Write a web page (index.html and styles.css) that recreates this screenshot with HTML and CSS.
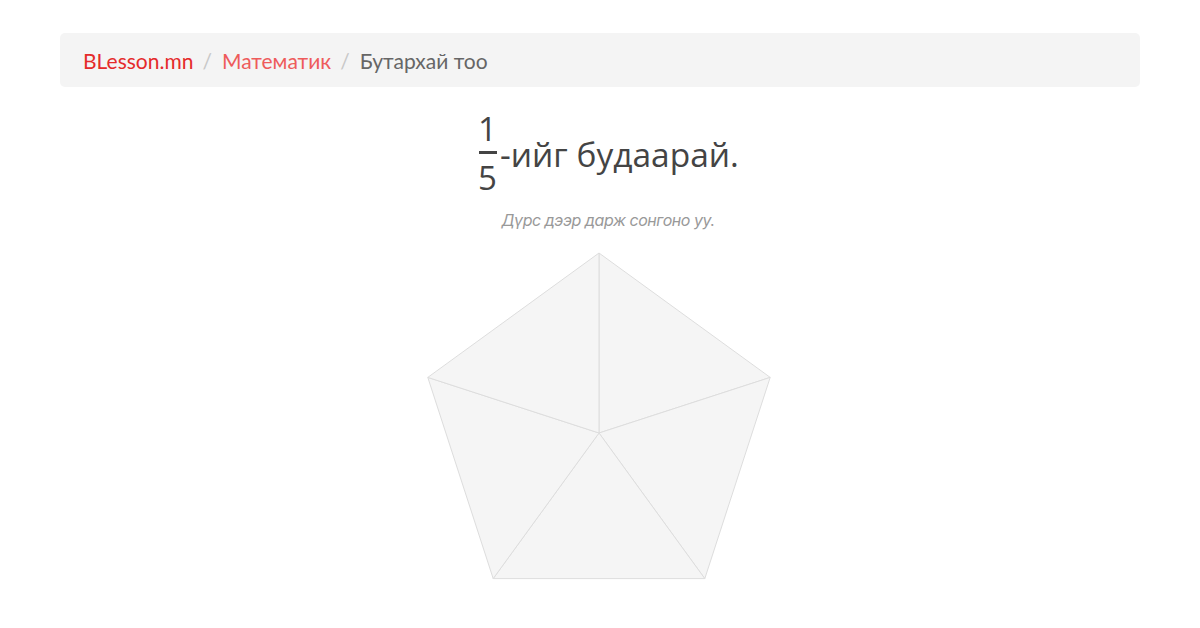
FILE: index.html
```html
<!DOCTYPE html>
<html lang="mn">
<head>
<meta charset="utf-8">
<link rel="stylesheet" href="styles.css">
</head>
<body>
<div class="page">
  <nav class="crumbs">
    <a class="c-home" href="#">BLesson.mn</a>
    <span class="sep">/</span>
    <a class="c-sub" href="#">Математик</a>
    <span class="sep">/</span>
    <span class="c-cur">Бутархай тоо</span>
  </nav>
  <div class="task">
    <div class="title">
      <span class="frac"><span class="num">1</span><span class="bar"></span><span class="den">5</span></span><span class="txt">-ийг будаарай.</span>
    </div>
    <div class="hint">Дүрс дээр дарж сонгоно уу.</div>
    <svg class="shape" width="346" height="330" viewBox="426 252 346 330">
      <g fill="#f5f5f5" stroke="#dddddd" stroke-width="1">
        <polygon points="599,434 599,254 770.2,378.4"/>
        <polygon points="599,434 770.2,378.4 704.8,579.6"/>
        <polygon points="599,434 704.8,579.6 493.2,579.6"/>
        <polygon points="599,434 493.2,579.6 427.8,378.4"/>
        <polygon points="599,434 427.8,378.4 599,254"/>
      </g>
    </svg>
  </div>
</div>
</body>
</html>
```
FILE: styles.css
```css
html, body { margin: 0; padding: 0; background: #fff; }
body { font-family: "Lato", "Liberation Sans", sans-serif; }
.page { padding: 33px 60px 0; }
.crumbs {
  display: flex; align-items: center;
  height: 54px; padding: 0 23px;
  background: #f4f4f4; border-radius: 5px;
  font-size: 21px;
}
.crumbs a { text-decoration: none; }
.c-home { color: #e52b2b; }
.c-sub { color: #ee5b5b; }
.c-cur { color: #666; }
.sep { color: #c8c8c8; padding: 0 10px 0 9px; }
.task { display: flex; flex-direction: column; align-items: center; }
.title {
  display: flex; align-items: center;
  margin-top: 24px; margin-left: 16px;
  color: #444;
}
.frac {
  display: flex; flex-direction: column; align-items: center;
  font-family: "Open Sans", sans-serif; font-size: 33px; line-height: 36px;
  padding: 0 1px;
}
.bar { display: block; width: 18px; height: 3px; background: #444; margin: 4px 0 6px; }
.txt { font-family: "Open Sans", sans-serif; font-size: 33.5px; margin-left: 2px; }
.hint {
  margin-top: 14px; margin-left: 16px;
  font-family: "Inter", sans-serif; font-style: italic; font-size: 16px;
  letter-spacing: -0.45px;
  color: #999;
}
.shape { display: block; margin-top: 21px; margin-right: 2px; }
```
